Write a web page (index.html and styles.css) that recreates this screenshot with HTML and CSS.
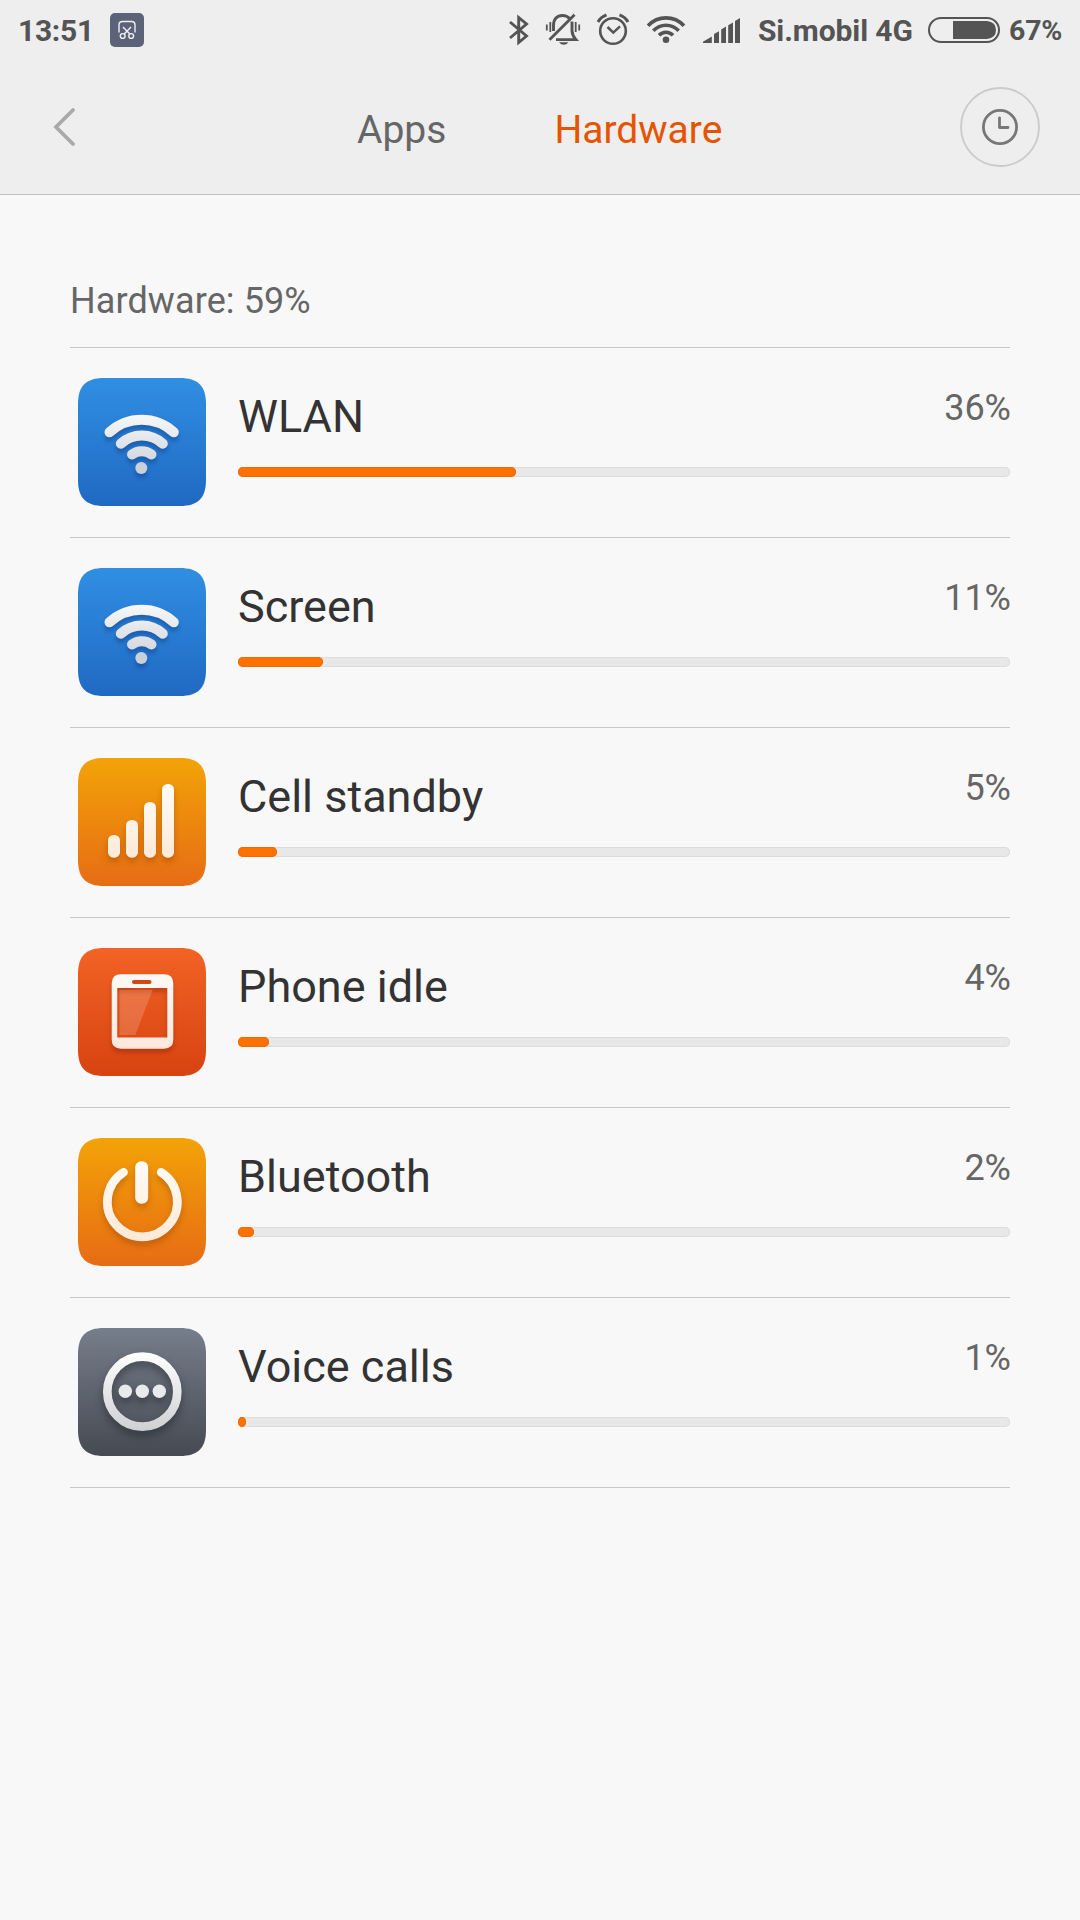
FILE: index.html
```html
<!DOCTYPE html>
<html lang="en">
<head>
<meta charset="utf-8">
<title>Hardware</title>
<link rel="stylesheet" href="styles.css">
</head>
<body>
<svg class="defs" width="0" height="0" aria-hidden="true">
  <defs>
    <linearGradient id="blue" x1="0" y1="0" x2="0" y2="1"><stop offset="0" stop-color="#308fe2"/><stop offset="1" stop-color="#2069c3"/></linearGradient>
    <linearGradient id="amber" x1="0" y1="0" x2="0" y2="1"><stop offset="0" stop-color="#f3a307"/><stop offset="1" stop-color="#e66c14"/></linearGradient>
    <linearGradient id="red" x1="0" y1="0" x2="0" y2="1"><stop offset="0" stop-color="#f26325"/><stop offset="1" stop-color="#d74311"/></linearGradient>
    <linearGradient id="slate" x1="0" y1="0" x2="0" y2="1"><stop offset="0" stop-color="#767e8b"/><stop offset="1" stop-color="#464a52"/></linearGradient>
    <linearGradient id="silver" gradientUnits="userSpaceOnUse" x1="0" y1="36" x2="0" y2="96"><stop offset="0" stop-color="#f8f8f8"/><stop offset="1" stop-color="#c9d0d7"/></linearGradient>
    <linearGradient id="cream" gradientUnits="userSpaceOnUse" x1="0" y1="24" x2="0" y2="103"><stop offset="0" stop-color="#fffcf8"/><stop offset="1" stop-color="#fde9d6"/></linearGradient>
    <linearGradient id="ring" gradientUnits="userSpaceOnUse" x1="0" y1="24" x2="0" y2="103"><stop offset="0" stop-color="#ffffff"/><stop offset="1" stop-color="#cfd0d2"/></linearGradient>
    <linearGradient id="rose" gradientUnits="userSpaceOnUse" x1="0" y1="26" x2="0" y2="101"><stop offset="0" stop-color="#fff8f5"/><stop offset="1" stop-color="#ffe6dc"/></linearGradient>
    <path id="tile" d="M26 0H102C120 0 128 8 128 26V102C128 120 120 128 102 128H26C8 128 0 120 0 102V26C0 8 8 0 26 0Z"/>
    <g id="wlan">
      <use href="#tile" fill="url(#blue)"/>
      <g class="shadow shadow-blue">
        <g fill="none" stroke="url(#silver)" stroke-width="10" stroke-linecap="round">
          <path d="M31.500 54.300A47.500 47.500 0 0 1 95.800 54.300"/>
          <path d="M42.800 65.700A31 31 0 0 1 84.800 65.700"/>
          <path d="M54 76.500A16 16 0 0 1 73.500 76.500"/>
        </g>
        <circle cx="63.300" cy="90" r="6" fill="#c9d0d7"/>
      </g>
    </g>
  </defs>
</svg>

<header class="header">
  <div class="status">
    <div class="status-left">
      <span class="time">13:51</span>
      <svg class="notice" width="34" height="34" viewBox="0 0 34 34">
        <rect width="34" height="34" rx="5" fill="#5c6379"/>
        <g fill="none" stroke="#f0f0f4" stroke-width="1.4">
          <path d="M9 19.5V12Q9 8.500 12.500 8.500H21.500Q25 8.500 25 12V19.500"/>
          <path d="M13 14L19.800 21M21 14L14.200 21"/>
          <circle cx="12.700" cy="23" r="2.400"/>
          <circle cx="21.200" cy="23" r="2.400"/>
        </g>
      </svg>
    </div>
    <div class="status-right">
      <svg width="26" height="60" viewBox="506 0 26 60" fill="none" stroke="#545454" stroke-width="2.900">
        <path d="M510 22L526.500 36L518.700 42.500V17.500L526.500 24L510 38"/>
      </svg>
      <svg width="38" height="60" viewBox="544 0 38 60" fill="none" stroke="#545454">
        <path d="M553.500 31V25.500C553.500 19 557 15.500 562.500 15.500Q567 15.500 569.500 18.500" stroke-width="2.900"/>
        <path d="M572 21.500V31Q572.500 36 575.800 39.600H556" stroke-width="2.900"/>
        <path d="M549.500 39.800L574.500 14.800" stroke-width="2.800"/>
        <path d="M546.800 24.500V30.500M550.300 22V32M575.700 22V32M579.200 24.500V30.500" stroke-width="1.800"/>
        <path d="M559 42.300H568.500Q566.500 44.800 563.700 44.800Q561 44.800 559 42.300Z" fill="#545454" stroke="none"/>
      </svg>
      <svg width="36" height="60" viewBox="595 0 36 60" fill="none" stroke="#545454">
        <circle cx="613" cy="31" r="12.800" stroke-width="2.600"/>
        <path d="M607.500 27L613.300 32.600L620 26.400" stroke-width="2.500"/>
        <path d="M598 22Q600.500 17 606.500 14.800M628 22Q625.500 17 619.500 14.800" stroke-width="3"/>
      </svg>
      <svg width="40" height="60" viewBox="646 0 40 60" fill="none" stroke="#545454" stroke-width="3.600">
        <path d="M648 25.700C658 15.200 674 15.200 684 25.700"/>
        <path d="M653.300 30.800C660.500 23.300 671.500 23.300 678.700 30.800"/>
        <path d="M659 35.300C663 31.200 669 31.200 673 35.300"/>
        <circle cx="666" cy="39.800" r="3.300" fill="#545454" stroke="none"/>
      </svg>
      <svg width="38" height="60" viewBox="703 0 38 60" fill="#545454">
        <path d="M703 43V41.800L711.800 36.500V43ZM714 43V34L719 31.200V43ZM721.200 43V29.500L726 26.500V43ZM728.200 43V25.300L733 22.400V43ZM735 43V21L740 18V43Z"/>
      </svg>
      <span class="carrier">Si.mobil 4G</span>
      <svg class="battery" width="72" height="26" viewBox="0 0 72 26">
        <rect x="1" y="1" width="70" height="24" rx="12" fill="none" stroke="#545454" stroke-width="2"/>
        <path d="M25 4H59Q68 5 68 13T59 22H25Z" fill="#545454"/>
      </svg>
      <span class="level">67%</span>
    </div>
  </div>
  <nav class="nav">
    <svg width="24" height="40" viewBox="0 0 24 40" fill="none" stroke="#a9a9a9" stroke-width="3.800" stroke-linecap="round" stroke-linejoin="miter">
      <path d="M21 3L4 20L21 37"/>
    </svg>
    <div class="tabs">
      <span class="tab">Apps</span>
      <span class="tab active">Hardware</span>
    </div>
    <svg width="80" height="80" viewBox="0 0 80 80" fill="none">
      <circle cx="40" cy="40" r="39" stroke="#cbcbcb" stroke-width="1.900"/>
      <circle cx="40" cy="40" r="16.600" stroke="#777" stroke-width="2.800"/>
      <path d="M39.500 31V40.500H48" stroke="#777" stroke-width="2.800" stroke-linecap="round" stroke-linejoin="round"/>
    </svg>
  </nav>
</header>

<main class="content">
  <h1 class="summary">Hardware: 59%</h1>
  <ul class="list">
    <li class="row">
      <svg class="icon" viewBox="0 0 128 128"><use href="#wlan"/></svg>
      <div class="info"><div class="labels"><span class="name">WLAN</span><span class="percent">36%</span></div><div class="bar"><div class="fill" style="width:278px"></div></div></div>
    </li>
    <li class="row">
      <svg class="icon" viewBox="0 0 128 128"><use href="#wlan"/></svg>
      <div class="info"><div class="labels"><span class="name">Screen</span><span class="percent">11%</span></div><div class="bar"><div class="fill" style="width:85px"></div></div></div>
    </li>
    <li class="row">
      <svg class="icon" viewBox="0 0 128 128">
        <use href="#tile" fill="url(#amber)"/>
        <g class="shadow shadow-amber" fill="url(#cream)">
          <rect x="30" y="77" width="12" height="22.700" rx="5.500"/>
          <rect x="48" y="62" width="12" height="37.700" rx="5.500"/>
          <rect x="66" y="44" width="12" height="55.700" rx="5.500"/>
          <rect x="84" y="26" width="12" height="73.700" rx="5.500"/>
        </g>
      </svg>
      <div class="info"><div class="labels"><span class="name">Cell standby</span><span class="percent">5%</span></div><div class="bar"><div class="fill" style="width:39px"></div></div></div>
    </li>
    <li class="row">
      <svg class="icon" viewBox="0 0 128 128">
        <use href="#tile" fill="url(#red)"/>
        <path class="shadow shadow-red" fill="url(#rose)" fill-rule="evenodd" d="M43 26.300H86Q95.300 26.300 95.300 35.500V91.500Q95.300 100.700 86 100.700H43Q33.700 100.700 33.700 91.500V35.500Q33.700 26.300 43 26.300ZM39.300 40V89.500H89.300V40ZM56 32A2 2 0 0 0 56 36H71.500A2 2 0 0 0 71.500 32Z"/>
        <path d="M41.300 42H74.700L57.300 87H41.300Z" fill="#fff" fill-opacity=".17"/>
      </svg>
      <div class="info"><div class="labels"><span class="name">Phone idle</span><span class="percent">4%</span></div><div class="bar"><div class="fill" style="width:31px"></div></div></div>
    </li>
    <li class="row">
      <svg class="icon" viewBox="0 0 128 128">
        <use href="#tile" fill="url(#amber)"/>
        <g class="shadow shadow-amber">
          <path d="M45.500 34.300A35 35 0 1 0 83.200 34.300" fill="none" stroke="url(#cream)" stroke-width="8.700" stroke-linecap="round"/>
          <rect x="57.200" y="23.300" width="13" height="42.500" rx="6" fill="url(#cream)"/>
        </g>
      </svg>
      <div class="info"><div class="labels"><span class="name">Bluetooth</span><span class="percent">2%</span></div><div class="bar"><div class="fill" style="width:16px"></div></div></div>
    </li>
    <li class="row">
      <svg class="icon" viewBox="0 0 128 128">
        <use href="#tile" fill="url(#slate)"/>
        <g class="shadow shadow-slate">
          <circle cx="64.300" cy="63.700" r="35" fill="none" stroke="url(#ring)" stroke-width="8.700"/>
          <g fill="#e9eaeb"><circle cx="47.300" cy="63.300" r="6.700"/><circle cx="64.300" cy="63.300" r="6.700"/><circle cx="81.300" cy="63.300" r="6.700"/></g>
        </g>
      </svg>
      <div class="info"><div class="labels"><span class="name">Voice calls</span><span class="percent">1%</span></div><div class="bar"><div class="fill dot" style="width:8px"></div></div></div>
    </li>
  </ul>
</main>
</body>
</html>
```
FILE: styles.css
```css
* { box-sizing: border-box; margin: 0; padding: 0; }

body {
  width: 1080px;
  height: 1920px;
  background: #f8f8f8;
  font-family: Roboto, "Liberation Sans", sans-serif;
  color: #333;
  overflow: hidden;
}

svg { display: block; flex: none; }
.defs { height: 0; }

.header {
  height: 195px;
  background: #eee;
  border-bottom: 1px solid #bebebe;
}

.status {
  height: 60px;
  display: flex;
  justify-content: space-between;
  color: #545454;
  font-weight: 700;
  line-height: 62px;
  white-space: nowrap;
}

.status-left { display: flex; padding-left: 18px; }
.time { width: 92px; font-size: 30px; letter-spacing: -.3px; }
.notice { margin-top: 13px; }

.status-right { display: flex; width: 574px; }
.status-right svg + svg { margin-left: 15px; }
.status-right svg:nth-child(2) { margin-left: 12px; }
.status-right svg:nth-child(3) { margin-left: 13px; }
.status-right svg:nth-child(5) { margin-left: 17px; }
.carrier { width: 187px; padding-left: 17px; font-size: 30px; letter-spacing: -.1px; }
.status-right .battery { margin-top: 17px; }
.level { padding-left: 9px; font-size: 28.500px; letter-spacing: -.2px; }

.nav {
  height: 134px;
  padding: 0 40px 0 52px;
  display: flex;
  align-items: center;
}

.tabs {
  flex: 1;
  padding: 6px 0 0 281px;
  display: flex;
  gap: 108px;
  font-size: 39px;
  line-height: 46px;
  color: #666;
}

.tab.active { color: #e65400; }

.content { padding: 82px 70px 0; }

.summary {
  height: 71px;
  font-size: 36px;
  line-height: 48px;
  font-weight: 400;
  letter-spacing: .1px;
  color: #666;
  border-bottom: 1px solid #c8c8c8;
}

.list { list-style: none; }

.row {
  height: 190px;
  padding: 30px 0 0 8px;
  display: flex;
  gap: 32px;
  border-bottom: 1px solid #c8c8c8;
}

.icon { width: 128px; height: 128px; }
.info { flex: 1; }

.labels {
  height: 89px;
  display: flex;
  justify-content: space-between;
}

.name { font-size: 45px; line-height: 78px; }
.percent { margin-right: -1px; font-size: 36px; line-height: 60px; color: #666; }

.bar {
  height: 10px;
  border-radius: 5px;
  background: #e8e8e8;
  box-shadow: inset 0 0 0 1px #dcdcdc;
}

.fill {
  height: 10px;
  border-radius: 5px;
  background: #ff7200;
  box-shadow: inset 0 0 0 1px #ee6c08;
}

.fill.dot { border-radius: 50%; }

.shadow-blue { filter: drop-shadow(0 4px 2px rgba(10, 50, 120, .4)); }
.shadow-amber { filter: drop-shadow(0 4px 3px rgba(130, 50, 0, .35)); }
.shadow-red { filter: drop-shadow(0 4px 2px rgba(120, 25, 0, .35)); }
.shadow-slate { filter: drop-shadow(0 5px 4px rgba(20, 22, 28, .45)); }
```
